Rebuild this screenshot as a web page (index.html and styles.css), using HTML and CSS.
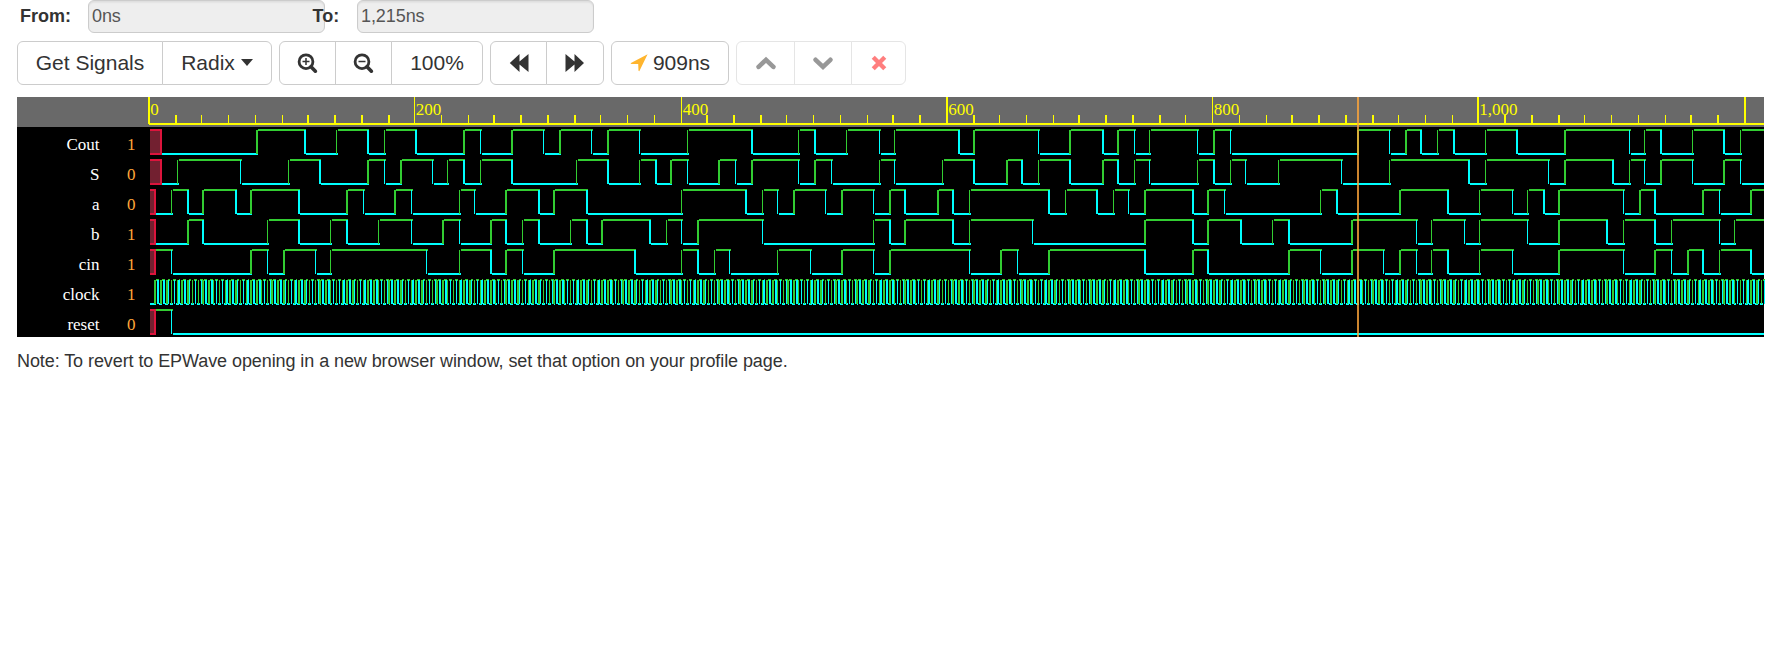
FILE: index.html
```
<!DOCTYPE html>
<html lang="en">
<head>
<meta charset="utf-8">
<title>EPWave</title>
<link rel="stylesheet" href="styles.css">
</head>
<body>
<form class="range">
  <label class="range-label from" for="from">From:</label>
  <input class="range-input" id="from" value="0ns" disabled>
  <label class="range-label to" for="to">To:</label>
  <input class="range-input" id="to" value="1,215ns" disabled>
</form>

<div class="toolbar">
  <div class="group">
    <button class="btn w-signals">Get Signals</button>
    <button class="btn w-radix">Radix<span class="caret"></span></button>
  </div>
  <div class="group">
    <button class="btn w-zoom" aria-label="Zoom in"><svg class="icon" width="21" height="21" viewBox="0 0 21 21"><circle cx="9" cy="8.700" r="6.900" fill="none" stroke="#333" stroke-width="2.800"/><path d="M14 13.700L18.400 18.200" stroke="#333" stroke-width="3.600" stroke-linecap="round"/><path d="M5.500 8.500h7M9 5v7" stroke="#333" stroke-width="1.500"/></svg></button>
    <button class="btn w-zoom" aria-label="Zoom out"><svg class="icon" width="21" height="21" viewBox="0 0 21 21"><circle cx="9" cy="8.700" r="6.900" fill="none" stroke="#333" stroke-width="2.800"/><path d="M14 13.700L18.400 18.200" stroke="#333" stroke-width="3.600" stroke-linecap="round"/><path d="M5.500 8.500h7" stroke="#333" stroke-width="1.500"/></svg></button>
    <button class="btn w-percent">100%</button>
  </div>
  <div class="group">
    <button class="btn w-step" aria-label="Back"><svg class="icon" width="20" height="18" viewBox="0 0 20 18"><path d="M10.500 0v7.600L19.500 0v18L10.500 10.400V18L0.800 9z" fill="#333"/></svg></button>
    <button class="btn w-step2" aria-label="Forward"><svg class="icon" width="20" height="18" viewBox="0 0 20 18"><path d="M9.500 0v7.600L0.500 0v18L9.500 10.400V18L19 9z" fill="#333"/></svg></button>
  </div>
  <div class="group">
    <button class="btn w-time"><svg class="icon" width="18" height="18" viewBox="0 0 18 18"><path d="M17.600 0.300L0.500 9.300L1.500 9.900L8.200 9.900L8.500 16.800L9.300 17.300z" fill="#ffb52e"/></svg><span>909ns</span></button>
  </div>
  <div class="group disabled">
    <button class="btn w-up" aria-label="Move up"><svg class="icon" width="20" height="14" viewBox="0 0 20 14"><path d="M2.600 10.800L10 3.800L17.400 10.800" fill="none" stroke="#333" stroke-width="4.600" stroke-linecap="round"/></svg></button>
    <button class="btn w-down" aria-label="Move down"><svg class="icon" width="20" height="14" viewBox="0 0 20 14"><path d="M2.600 3.800L10 10.800L17.400 3.800" fill="none" stroke="#333" stroke-width="4.600" stroke-linecap="round"/></svg></button>
    <button class="btn w-remove" aria-label="Remove"><svg class="icon" width="16" height="16" viewBox="0 0 16 16"><path d="M3.300 3.300L12.700 12.700M12.700 3.300L3.300 12.700" stroke="#f00" stroke-width="4.800"stroke-linecap="square" transform="translate(.8 .8) scale(.9)"/></svg></button>
  </div>
</div>

<svg class="waves" id="waves" width="1748" height="240" viewBox="17 97 1748 240"></svg>
<p class="note">Note: To revert to EPWave opening in a new browser window, set that option on your profile page.</p>
<script src="waves.js"></script>
</body>
</html>
```
FILE: styles.css
```
body {
  margin: 0;
  padding: 0 15px 0 17px;
  background: #fff;
  color: #333;
  font-family: "Liberation Sans", Arial, sans-serif;
  font-size: 18px;
  overflow: hidden;
}
.range {
  display: flex;
  height: 33px;
  margin: 0;
}
.range-label {
  font-weight: bold;
  line-height: 32px;
  box-sizing: border-box;
  position: relative;
  z-index: 1;
}
.from { width: 71px; padding-left: 3px; }
.to { width: 45px; margin-left: -13px; padding-left: 0.5px; }
.range-input {
  box-sizing: border-box;
  width: 237px;
  height: 33px;
  padding: 0 0 0 3px;
  border: 1px solid #ccc;
  border-radius: 6px;
  background: #eee;
  box-shadow: inset 0 1.5px 1.5px rgba(0, 0, 0, 0.075);
  color: #555;
  font: inherit;
  letter-spacing: -0.08px;
}
.toolbar {
  display: flex;
  gap: 7px;
  margin-top: 8px;
}
.group { display: flex; }
.disabled { opacity: 0.5; }
.btn {
  display: flex;
  align-items: center;
  justify-content: center;
  box-sizing: border-box;
  height: 44px;
  margin: 0 0 0 -1px;
  padding: 0;
  border: 1px solid #ccc;
  background: #fff;
  color: #333;
  font: 21px "Liberation Sans", Arial, sans-serif;
  white-space: nowrap;
}
.btn:first-child {
  margin-left: 0;
  border-radius: 6px 0 0 6px;
}
.btn:last-child { border-radius: 0 6px 6px 0; }
.btn:only-child { border-radius: 6px; }
.icon { display: block; }
.caret {
  margin: 0 0 1px 6px;
  border: 6.5px solid transparent;
  border-top: 7px solid #333;
  border-bottom: 0;
}
.w-signals { width: 146px; }
.w-radix { width: 110px; }
.w-zoom { width: 57px; }
.w-percent { width: 92px; }
.w-step { width: 57px; }
.w-step2 { width: 58px; }
.w-time { width: 118px; gap: 5px; }
.w-up { width: 59px; }
.w-down { width: 58px; }
.w-remove { width: 55px; }
.waves {
  display: block;
  margin-top: 12px;
}
.wave-text {
  font-family: "Liberation Serif", "Times New Roman", serif;
  font-size: 17px;
}
.note {
  margin: 14px 0 0;
  line-height: 20px;
  letter-spacing: -0.082px;
}
```
FILE: waves.js
```
const LEFT = 149, TOP = 97, RIGHT = 1764, HEAD = 30, ROW = 30;
const GREEN = '#32cd32', CYAN = '#00ffff', YELLOW = '#ffff00';
const END = 1215;

// Toggle points are stored as counts of 12ns periods after `offset`.
const signals = [
  { name: 'Cout', value: '1', offset: 9, start: 0, edges: [6,9,11,13,14,16,19,20,22,24,25,27,28,30,33,37,40,41,43,45,46,50,51,55,57,59,60,61,62,65,66,67,75,77,78,79,80,81,83,85,88,92,93,94,96,98,99] },
  { name: 'S', value: '0', offset: 9, start: 0, edges: [1,5,8,10,13,14,15,17,18,19,20,22,26,28,30,31,32,33,35,36,37,40,41,42,45,46,49,51,53,54,55,57,59,60,61,62,65,66,67,68,70,74,77,82,83,87,88,91,92,93,94,96,98,99] },
  { name: 'a', value: '0', offset: 5, start: 0, edges: [1,2,3,5,6,9,12,13,15,16,19,20,22,24,25,27,33,37,38,39,40,42,43,45,46,47,49,50,51,56,57,59,60,61,62,65,66,67,73,74,78,81,83,85,86,87,88,92,93,94,97,98,100] },
  { name: 'b', value: '1', offset: 5, start: 0, edges: [2,3,7,9,11,12,14,16,18,19,21,22,23,24,26,27,28,31,32,33,34,38,45,46,47,50,51,55,62,65,66,68,70,71,75,79,80,82,83,86,88,91,92,94,95,98,99] },
  { name: 'cin', value: '1', offset: 5, start: 1, edges: [1,6,7,8,10,11,17,19,21,22,23,25,30,33,34,35,36,39,41,43,45,46,51,53,54,56,62,65,66,71,73,75,77,78,79,80,81,83,85,88,92,94,95,96,97,98,100] },
  { name: 'clock', value: '1', clock: true },
  { name: 'reset', value: '0', offset: 5, start: 1, edges: [1] }
];

const xAt = t => LEFT + 1.5 * Math.round(t * 1077 / END);
const rect = (x, y, w, h, fill, extra = '') =>
  `<rect x="${x}" y="${y}" width="${w}" height="${h}" fill="${fill}" ${extra}/>`;
const text = (x, y, str, fill, anchor = 'start') =>
  `<text class="wave-text" x="${x}" y="${y}" fill="${fill}" text-anchor="${anchor}">${str}</text>`;
// A vertical rule covers two pixels on a whole centre and one on a half.
const vline = (x, y, h, fill) =>
  x % 1 ? rect(x - 0.5, y, 1, h, fill) : rect(x - 1, y, 2, h, fill);

let out = rect(17, TOP, 1747, HEAD, '#696969') + rect(17, TOP + HEAD, 1747, 210, '#000');

for (let i = 0; i <= 60; i++) {
  const x = xAt(i * 20), major = i % 10 === 0;
  out += vline(x, major ? TOP : TOP + 18, major ? 27 : 9, YELLOW);
  if (major && i < 60) out += text(x + 1.3, TOP + 18, (i * 20).toLocaleString('en-US'), YELLOW);
}
out += rect(LEFT, 123, RIGHT - LEFT, 2, YELLOW);

signals.forEach((s, row) => {
  const y = TOP + HEAD + row * ROW;
  out += text(99.5, y + 23, s.name, '#fff', 'end') + text(135.5, y + 23, s.value, '#ffa63a', 'end');

  let level, from, points;
  if (s.clock) {
    level = 0;
    from = 150;
    points = [];
    for (let t = 5; t <= END; t += 2) points.push(xAt(t));
  } else {
    level = s.start;
    from = Math.floor(xAt(s.offset) + 1);
    points = s.edges.map(k => xAt(s.offset + 12 * k));
    out += rect(150, y + 2, from - 150, 26, '#dc143c') +
           rect(150, y + 4, from - 152, 22, '#722030');
  }
  for (const x of [...points, RIGHT]) {
    const to = x === RIGHT ? RIGHT : Math.round(x + 1.2);
    if (to > from) out += rect(from, y + (level ? 2 : 26), to - from, 2, level ? GREEN : CYAN);
    from = to;
    level = 1 - level;
    if (x !== RIGHT) out += vline(x, y + 3, 24, level ? GREEN : CYAN);
  }
});

out += rect(xAt(909) - 1, TOP, 2, 240, '#ffa63a', 'opacity="0.8"');
document.getElementById('waves').innerHTML = out;
```
